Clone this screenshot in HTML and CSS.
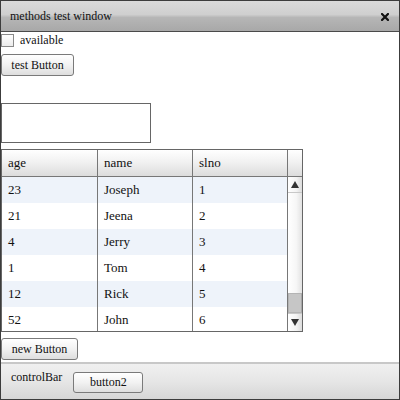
FILE: index.html
```html
<!DOCTYPE html>
<html>
<head>
<meta charset="utf-8">
<link rel="stylesheet" href="styles.css">
</head>
<body>
<div class="window">
  <div class="titlebar">
    <span class="title">methods test window</span>
    <svg class="close" width="8" height="8" viewBox="0 0 8 8"><path d="M1 1L7 7M7 1L1 7" stroke="#111" stroke-width="2.2" stroke-linecap="square"/></svg>
  </div>
  <div class="content">
    <label class="check-row"><span class="checkbox"></span><span>available</span></label>
    <button class="btn test-btn">test Button</button>
    <div class="textbox"></div>
    <div class="grid">
      <div class="grid-head">
        <div class="hcell">age</div>
        <div class="hcell">name</div>
        <div class="hcell">slno</div>
        <div class="hcell scroll-head"></div>
      </div>
      <div class="grid-body">
        <div class="rows">
          <div class="row alt"><div class="cell">23</div><div class="cell">Joseph</div><div class="cell">1</div></div>
          <div class="row"><div class="cell">21</div><div class="cell">Jeena</div><div class="cell">2</div></div>
          <div class="row alt"><div class="cell">4</div><div class="cell">Jerry</div><div class="cell">3</div></div>
          <div class="row"><div class="cell">1</div><div class="cell">Tom</div><div class="cell">4</div></div>
          <div class="row alt"><div class="cell">12</div><div class="cell">Rick</div><div class="cell">5</div></div>
          <div class="row"><div class="cell">52</div><div class="cell">John</div><div class="cell">6</div></div>
        </div>
        <div class="scrollbar">
          <div class="sb-btn sb-up"><span class="tri-up"></span></div>
          <div class="sb-track"></div>
          <div class="sb-thumb"></div>
          <div class="sb-btn sb-down"><span class="tri-down"></span></div>
        </div>
      </div>
    </div>
    <button class="btn new-btn">new Button</button>
    <div class="controlbar">
      <span class="cb-label">controlBar</span>
      <button class="btn btn2">button2</button>
    </div>
  </div>
</div>
</body>
</html>
```
FILE: styles.css
```css
* { box-sizing: border-box; }
html, body { margin: 0; padding: 0; background: #fff; }
body, button {
  font-family: "Liberation Serif", "Times New Roman", serif;
  font-size: 12px;
  color: #111;
}

.window {
  width: 400px; height: 400px;
  border: 1px solid #3c3c3c;
  display: flex; flex-direction: column;
  background: #fff;
}
.titlebar {
  height: 31px;
  flex: none;
  border-bottom: 1px solid #4a4a4a;
  background: linear-gradient(#dadada, #cfcfcf 45%, #b6b6b6 55%, #a8a8a8);
  display: flex; align-items: center; justify-content: space-between;
  padding: 0 10px 0 9px;
}
.title { font-size: 12px; line-height: 30px; color: #111; }
.close { display: block; margin-top: 1px; }

.content {
  flex: 1;
  display: flex; flex-direction: column; align-items: flex-start;
}
.check-row {
  display: flex; align-items: center; gap: 6px;
  margin-top: 2px; height: 13px;
  font-size: 12px;
}
.checkbox {
  width: 13px; height: 13px;
  border: 1px solid #8a8a8a;
  background: linear-gradient(#fff, #ececec);
  display: block;
}

.btn {
  font-size: 12px;
  white-space: nowrap;
  height: 22px;
  border: 1px solid #7a7a7a;
  border-radius: 3px;
  background: linear-gradient(#ffffff, #f2f2f2 50%, #dedede);
  padding: 0;
  line-height: 20px;
  margin: 0;
  text-align: center;
}
.test-btn { margin-top: 7px; width: 73px; }
.textbox {
  margin-top: 27px;
  width: 150px; height: 40px;
  border: 1px solid #666;
  background: #fff;
}

.grid {
  margin-top: 6px;
  width: 302px;
  border: 1px solid #666;
  font-size: 13px;
}
.grid-head {
  display: grid;
  grid-template-columns: 96px 95px 95px 14px;
  height: 27px;
  border-bottom: 1px solid #777;
  background: linear-gradient(#ffffff, #f0f0f0 50%, #dcdcdc);
}
.hcell {
  border-right: 1px solid #777;
  line-height: 26px;
  padding-left: 6px;
}
.scroll-head { border-right: none; }
.grid-body {
  display: flex;
  height: 154px;
  overflow: hidden;
}
.rows { width: 286px; }
.row {
  display: grid;
  grid-template-columns: 96px 95px 95px;
  height: 26px;
}
.row.alt { background: #eef3fa; }
.cell {
  border-right: 1px solid #777;
  line-height: 26px;
  padding-left: 6px;
}
.scrollbar {
  width: 14px;
  display: flex; flex-direction: column;
  background: linear-gradient(90deg, #ffffff, #f6f6f6 60%, #e2e2e2);
}
.sb-btn {
  display: flex; align-items: center; justify-content: center;
  background: linear-gradient(90deg, #ffffff, #f3f3f3 60%, #dcdcdc);
}
.sb-up { height: 16px; border-bottom: 1px solid #c8c8c8; }
.sb-down { height: 18px; border-top: 1px solid #c8c8c8; }
.sb-track { height: 100px; }
.sb-thumb {
  height: 20px;
  background: #c6c6c6;
  border: 1px solid #b4b4b4;
  border-right-color: #a8a8a8;
}
.tri-up {
  width: 0; height: 0;
  border-left: 4px solid transparent;
  border-right: 4px solid transparent;
  border-bottom: 7px solid #333;
}
.tri-down {
  width: 0; height: 0;
  border-left: 4px solid transparent;
  border-right: 4px solid transparent;
  border-top: 7px solid #333;
}

.new-btn { margin-top: 6px; width: 77px; }

.controlbar {
  margin-top: auto;
  width: 100%;
  height: 37px;
  border-top: 2px solid #c8c8c8;
  background: linear-gradient(#f0f0f0, #e6e6e6 50%, #d6d6d6);
  display: flex; align-items: flex-start;
  padding: 5px 0 0 10px;
  gap: 11px;
}
.cb-label { font-size: 12px; line-height: 16px; }
.btn2 { width: 70px; height: 21px; margin-top: 3px; line-height: 19px; }
```
